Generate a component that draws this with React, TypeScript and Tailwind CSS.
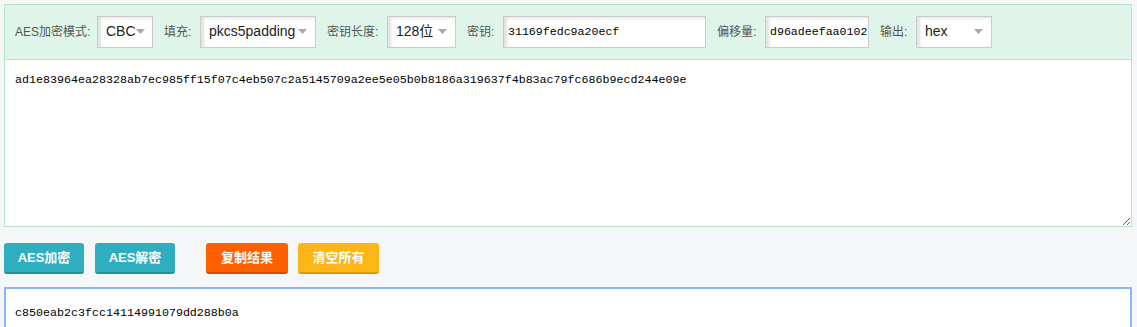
import React from 'react';

const labelCls = 'shrink-0 text-[12px] text-[#555] leading-none';
const boxCls =
  'h-[32px] bg-white border border-[#cccccc] shadow-[inset_3px_1px_3px_rgba(0,0,0,0.12)] shrink-0';

const mono = { fontFamily: '"Liberation Mono", "Courier New", monospace' };

const Caret: React.FC = () => (
  <svg width="9" height="5" viewBox="0 0 9 5" className="shrink-0">
    <path d="M0 0 L9 0 L4.5 5 Z" fill="#a9a9a9" />
  </svg>
);

const FakeSelect: React.FC<{ value: string; width: string }> = ({ value, width }) => (
  <div className={`${boxCls} ${width} flex items-center justify-between pl-[8px] pr-[8px]`}>
    <span className="text-[14px] text-[#222]">{value}</span>
    <Caret />
  </div>
);

const TextBox: React.FC<{ value: string; width: string }> = ({ value, width }) => (
  <input
    readOnly
    value={value}
    className={`${boxCls} ${width} pl-[4px] text-[11.6px] text-black outline-none`}
    style={mono}
  />
);

const Btn: React.FC<{ text: string; cls: string }> = ({ text, cls }) => (
  <button className={`h-[31px] rounded-[3px] text-white font-bold text-[13px] border-b-2 ${cls}`}>
    {text}
  </button>
);

export default function App() {
  return (
    <div
      className="w-[1137px] h-[327px] overflow-hidden bg-[#f5f6f8] pt-[4px] pl-[4px] pr-[5px]"
      style={{ fontFamily: '"Liberation Sans", Arial, "Noto Sans CJK SC", sans-serif' }}
    >
      <div className="h-[55px] bg-[#e0f5ea] border border-[#b5e3cb] border-b-0 flex items-center pl-[10px] pb-[1px]">
        <span className={`${labelCls} w-[82px]`}>AES加密模式:</span>
        <FakeSelect value="CBC" width="w-[56px]" />
        <span className={`${labelCls} w-[36px] ml-[11px]`}>填充:</span>
        <FakeSelect value="pkcs5padding" width="w-[116px]" />
        <span className={`${labelCls} w-[60px] ml-[11px]`}>密钥长度:</span>
        <FakeSelect value="128位" width="w-[69px]" />
        <span className={`${labelCls} w-[36px] ml-[11px]`}>密钥:</span>
        <TextBox value="31169fedc9a20ecf" width="w-[203px]" />
        <span className={`${labelCls} w-[48px] ml-[11px]`}>偏移量:</span>
        <TextBox value="d96adeefaa0102030405060708090a0b" width="w-[104px]" />
        <span className={`${labelCls} w-[36px] ml-[11px]`}>输出:</span>
        <FakeSelect value="hex" width="w-[76px]" />
      </div>
      <textarea
        readOnly
        className="block w-full h-[168px] bg-white border border-[#b5e3cb] outline-none pt-[12px] px-[10px] text-[11.67px] leading-[16px] text-black"
        style={mono}
        value="ad1e83964ea28328ab7ec985ff15f07c4eb507c2a5145709a2ee5e05b0b8186a319637f4b83ac79fc686b9ecd244e09e"
      />
      <div className="flex items-center mt-[16px]">
        <Btn text="AES加密" cls="w-[80px] bg-[#2eaebe] border-[#22909d]" />
        <div className="w-[11px]" />
        <Btn text="AES解密" cls="w-[80px] bg-[#2eaebe] border-[#22909d]" />
        <div className="w-[31px]" />
        <Btn text="复制结果" cls="w-[82px] bg-[#fe6000] border-[#d24f00]" />
        <div className="w-[10px]" />
        <Btn text="清空所有" cls="w-[81px] bg-[#feb516] border-[#dc9a0c]" />
      </div>
      <textarea
        readOnly
        className="block w-full h-[100px] mt-[13px] bg-white border-2 border-[#8db5f7] outline-none pt-[16px] px-[9px] text-[11.67px] leading-[16px] text-black resize-none"
        style={mono}
        value="c850eab2c3fcc14114991079dd288b0a"
      />
    </div>
  );
}
